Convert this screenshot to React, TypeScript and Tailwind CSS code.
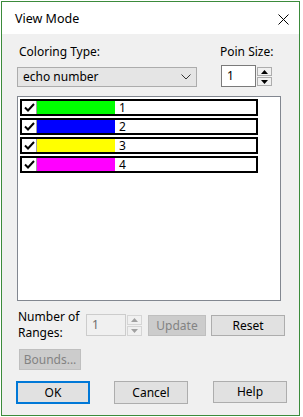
const FONT = { fontFamily: '"Noto Sans", "Liberation Sans", sans-serif' }

const ROWS = [
  { color: 'bg-[#00ff00]', label: '1' },
  { color: 'bg-[#0000ff]', label: '2' },
  { color: 'bg-[#ffff00]', label: '3' },
  { color: 'bg-[#ff00ff]', label: '4' },
]

function Tri({ up, fill }: { up?: boolean; fill: string }) {
  return (
    <svg width="7" height="4" viewBox="0 0 7 4">
      <path d={up ? 'M0 4 L3.5 0 L7 4 Z' : 'M0 0 L7 0 L3.5 4 Z'} fill={fill} />
    </svg>
  )
}

function Check() {
  return (
    <svg width="11" height="9" viewBox="0 0 11 9">
      <path d="M1 4.5 L4 7.5 L10 1" stroke="#000" strokeWidth="2" fill="none" />
    </svg>
  )
}

function Btn({ children, disabled, primary, className = '' }: { children: string; disabled?: boolean; primary?: boolean; className?: string }) {
  const look = disabled
    ? 'bg-[#cccccc] border border-[#bfbfbf] text-[#838383]'
    : primary
      ? 'bg-[#e1e1e1] border-2 border-[#0078d7] text-black'
      : 'bg-[#e1e1e1] border border-[#adadad] text-black'
  return (
    <div className={`flex items-center justify-center text-[12px] ${look} ${className}`}>{children}</div>
  )
}

export default function App() {
  return (
    <div className="w-[303px] h-[417px] bg-white pl-[1px] pt-[1px]" style={FONT}>
      <div className="w-[299px] h-[415px] border border-[#3b8b3b] flex flex-col">
        {/* Title bar */}
        <div className="h-[32px] bg-white flex items-center justify-between pl-[13px] pr-[10px] pt-[3px] shrink-0">
          <span className="text-[12.5px] text-black">View Mode</span>
          <svg width="11" height="11" viewBox="0 0 11 11">
            <path d="M0.5 0.5 L10.5 10.5 M10.5 0.5 L0.5 10.5" stroke="#000" strokeWidth="1" />
          </svg>
        </div>

        {/* Body */}
        <div className="flex-1 bg-[#f0f0f0] pl-[15px] pt-[10px]">
          <div className="flex gap-[24px]">
            <div className="w-[180px] flex flex-col">
              <div className="h-[16px] leading-[16px] text-[12px] pl-[2px] text-black">Coloring Type:</div>
              <div className="mt-[7px] h-[20px] bg-[#e5e5e5] border border-[#acacac] flex items-center justify-between pl-[5px] pr-[5px] text-[12px] text-black">
                <span>echo number</span>
                <svg width="10" height="6" viewBox="0 0 10 6">
                  <path d="M0.5 0.5 L5 5 L9.5 0.5" stroke="#333" strokeWidth="1" fill="none" />
                </svg>
              </div>
            </div>
            <div className="flex flex-col">
              <div className="h-[16px] leading-[16px] text-[12px] -ml-[1px] text-black">Poin Size:</div>
              <div className="mt-[5px] flex">
                <div className="w-[35px] h-[22px] bg-white border border-[#7a7a7a] text-[12px] pl-[5px] flex items-center text-black">1</div>
                <div className="ml-[1px] pt-[2px] flex flex-col gap-[1px]">
                  <div className="w-[15px] h-[9px] bg-[#f0f0f0] border border-[#adadad] flex items-center justify-center"><Tri up fill="#000" /></div>
                  <div className="w-[15px] h-[9px] bg-[#f0f0f0] border border-[#adadad] flex items-center justify-center"><Tri fill="#000" /></div>
                </div>
              </div>
            </div>
          </div>

          {/* List */}
          <div className="mt-[9px] w-[264px] h-[205px] bg-white border border-[#828790] pl-[2px] pt-[2px] flex flex-col gap-[2px]">
            {ROWS.map((r) => (
              <div key={r.label} className="w-[238px] h-[17px] border-2 border-black flex items-stretch">
                <div className="w-[15px] bg-white border-r border-[#a0a0a0] flex items-center justify-center">
                  <Check />
                </div>
                <div className={`w-[78px] ${r.color}`} />
                <div className="pl-[4px] text-[12px] leading-[13px] text-black">{r.label}</div>
              </div>
            ))}
          </div>

          {/* Ranges */}
          <div className="mt-[10px] flex items-start">
            <div className="w-[69px] -mt-[2px] pl-[1px] text-[12px] leading-[16px] text-black">
              <div>Number of</div>
              <div>Ranges:</div>
            </div>
            <div className="mt-[3px] w-[40px] h-[22px] border border-[#cccccc] bg-[#f0f0f0] text-[12px] text-[#6d6d6d] pl-[5px] flex items-center">1</div>
            <div className="ml-[1px] mt-[4px] flex flex-col gap-[1px]">
              <div className="w-[15px] h-[10px] bg-[#f0f0f0] border border-[#d5d5d5] flex items-center justify-center"><Tri up fill="#a0a0a0" /></div>
              <div className="w-[15px] h-[10px] bg-[#f0f0f0] border border-[#d5d5d5] flex items-center justify-center"><Tri fill="#a0a0a0" /></div>
            </div>
            <Btn disabled className="ml-[6px] mt-[4px] w-[58px] h-[21px]">Update</Btn>
            <Btn className="ml-[5px] mt-[4px] w-[74px] h-[21px]">Reset</Btn>
          </div>
          <Btn disabled className="mt-[8px] ml-[2px] w-[62px] h-[21px]">Bounds...</Btn>

          {/* Dialog buttons */}
          <div className="mt-[11px] flex items-start">
            <Btn primary className="-ml-[1px] w-[74px] h-[23px]">OK</Btn>
            <Btn className="ml-[24px] w-[74px] h-[23px]">Cancel</Btn>
            <Btn className="ml-[25px] w-[74px] h-[22px]">Help</Btn>
          </div>
        </div>
      </div>
    </div>
  )
}
